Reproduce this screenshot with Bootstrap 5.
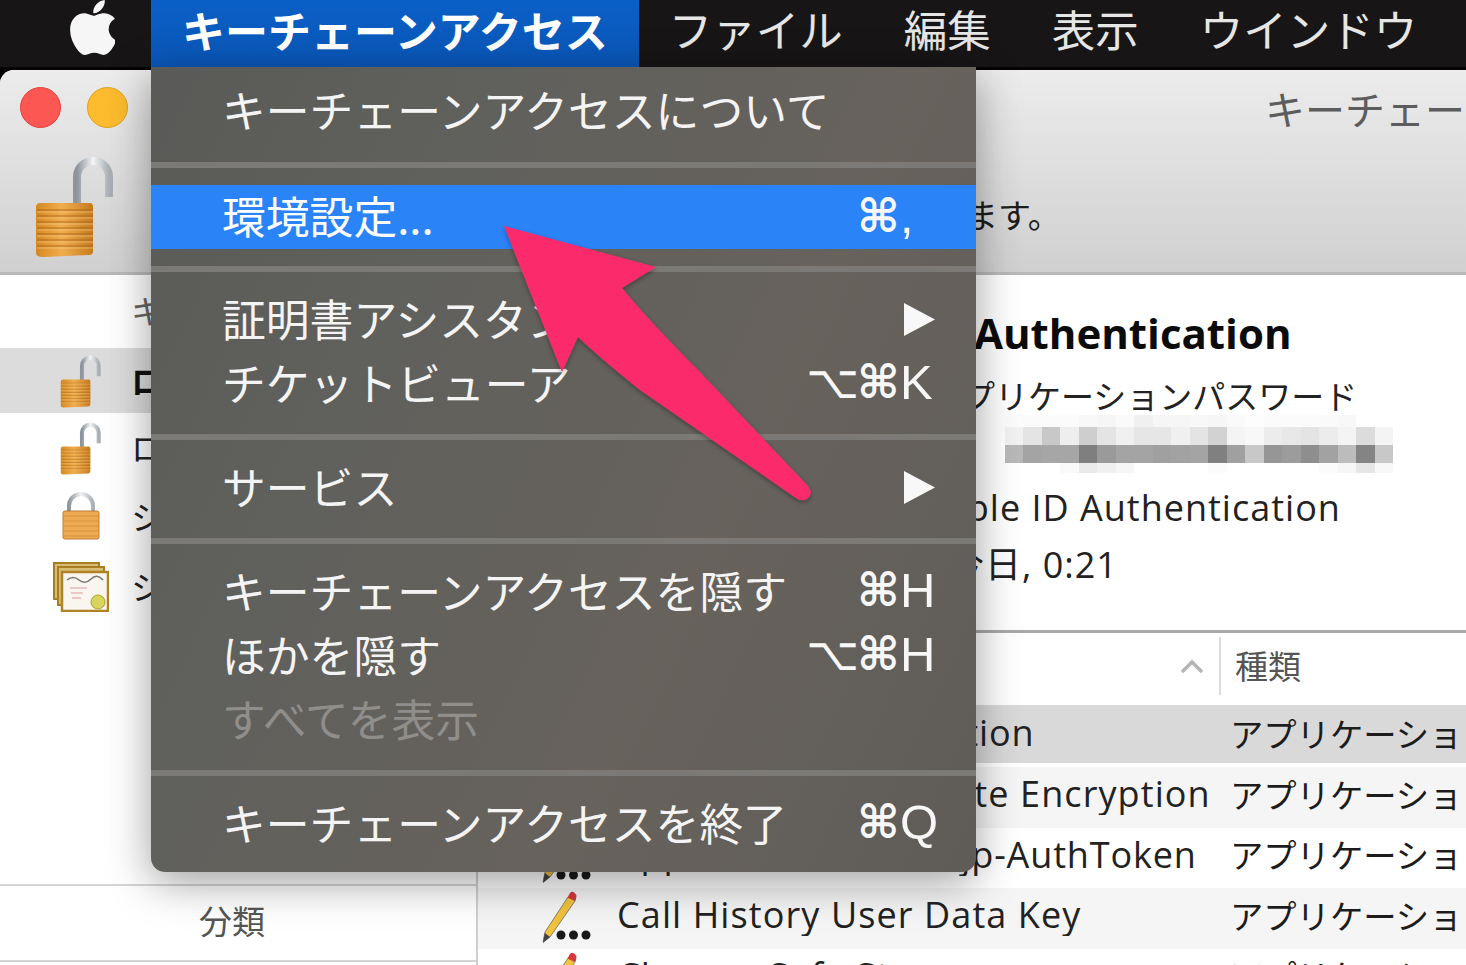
<!DOCTYPE html>
<html lang="ja">
<head>
<meta charset="utf-8">
<title>キーチェーンアクセス</title>
<link href="https://cdn.jsdelivr.net/npm/bootstrap@5.3.0/dist/css/bootstrap.min.css" rel="stylesheet">
<style>
html,body{margin:0;height:965px;overflow:hidden;background:#fff}
body{font-family:"Open Sans","Noto Sans CJK JP",sans-serif;color:#222;line-height:1.2}
.jp{font-family:"Noto Sans CJK JP",sans-serif}
.stage{width:1466px;height:965px;overflow:hidden;background:#000}
/* menu bar */
.mbar{height:70px;background:#171515;border-bottom:3px solid #050303;color:#e6e6e6;font-size:43.5px;font-family:"Noto Sans CJK JP",sans-serif;font-weight:400;white-space:nowrap}
.apl{width:45px;height:55px;margin:0 36px 0 70px;fill:#f6f6f6;flex:none}
.mi{height:67px;padding:0 31px 0 30px;line-height:58px}
.mi-on{background:linear-gradient(#0a5fc6,#0a57b8);color:#fff;font-weight:700;padding:0 31px 0 31px;font-size:43px}
/* window */
.wnd{height:895px;background:#fff;border-radius:14px 0 0 0;overflow:hidden}
.tbar{height:205px;background:linear-gradient(#ececec,#d0d0d0);border-bottom:3px solid #b9b9b9;overflow:hidden;flex:none}
.tl{width:41px;height:41px;border-radius:50%;flex:none}
.tl-r{background:#fc5753;border:1px solid #e0443e;margin-left:20px}
.tl-y{background:#fdbc2e;border:1px solid #dfa023;margin-left:26px}
.ttl{font-size:40px;color:#5c5c5c;margin-left:1137px;white-space:nowrap;font-weight:400;line-height:42px}
.tr1{height:76px;padding-top:17px}
.biglock{width:80px;height:104px;margin:8px 0 0 35px;flex:none}
.tnote{font-size:33px;color:#1d1d1d;margin:49px 0 0 850px;white-space:nowrap}
/* sidebar */
.side{width:478px;flex:none;border-right:2px solid #cfcfcf;font-family:"Noto Sans CJK JP",sans-serif}
.sh{height:73px;padding-left:131px;line-height:70px;font-size:33px;color:#666;white-space:nowrap}
.sr{height:65px;font-size:33px;white-space:nowrap;position:relative}
.sr-on{background:#dcdcdc;font-weight:700;color:#111}
.ico{flex:none}
.si{margin-left:60px;width:42px;height:54px}
.st{margin-left:29px}
.st-c{margin-left:22px}
.ci{margin-left:53px}
.sr3{height:69px}
.sr4{height:71px}
.sfoot{margin-top:auto;margin-bottom:3px;border-top:2px solid #d5d5d5;height:78px;text-align:center;font-size:33px;color:#555;line-height:68px;padding-right:12px;border-bottom:2px solid #d5d5d5;flex:none;font-weight:400}
.sside{height:690px}
/* main */
.mainp{width:988px;overflow:hidden;flex:none}
.dtl{height:358px;border-bottom:3px solid #a9a9a9;flex:none;white-space:nowrap;padding-top:33px}
.d1{font-size:42px;font-weight:700;color:#0b0b0b;line-height:50px;margin-left:496px}
.d2{font-size:33px;line-height:50px;margin:12px 0 0 451px;color:#222;font-family:"Noto Sans CJK JP",sans-serif;font-weight:400}
.blr{display:block;margin:-5px 0 0 526px;width:390px;height:66px}
.d3{font-size:36px;letter-spacing:1px;line-height:50px;margin:2px 0 0 442px;color:#222}
.d4{font-size:36px;letter-spacing:1px;line-height:50px;margin:4px 0 0 470px;color:#222}
.thd{height:72px;flex:none;font-size:33px;color:#555;font-family:"Noto Sans CJK JP",sans-serif;padding-bottom:6px}
.caret{width:24px;height:14px;margin-left:702px;flex:none}
.cdiv{width:2px;height:58px;background:#dcdcdc;margin:0 14px 0 15px;flex:none}
.tr{height:60.5px;flex:none;white-space:nowrap;font-size:36px;letter-spacing:1.1px;color:#222}
.tr-sel{background:#d9d9d9;height:58px;margin-bottom:4px}
.tr-alt{background:#f5f5f5}
.pen{width:54px;height:56px;margin-left:62px;flex:none}
.tn{width:613px;flex:none;margin-left:23px;overflow:hidden;margin-bottom:7px}
.tn-t{letter-spacing:.85px}
.tk{font-family:"Noto Sans CJK JP",sans-serif;font-size:33.3px;font-weight:400;overflow:hidden;color:#1c1c1c;letter-spacing:0;margin-bottom:7px}
.tr-sel .tn,.tr-sel .tk{margin-bottom:2px}
/* dropdown */
.dmenu{position:absolute;left:151px;top:67px;width:825px;height:805px;padding-top:11px;border-radius:0 0 14px 14px;background:linear-gradient(115deg,#5a5a58 0%,#60605c 30%,#67625c 65%,#5f5c58 100%);box-shadow:0 10px 44px rgba(0,0,0,.38);color:#f4f4f4;font-family:"Noto Sans CJK JP",sans-serif;font-size:43.8px;font-weight:400;white-space:nowrap}
.mrow{height:64px;padding-left:71px;line-height:62px;position:relative}
.mrow-on{background:#2a84f8;color:#fff;line-height:60px}
.mrow-off{color:#908e8b}
.msep{height:6px;background:#7b7a76;margin:19px 0 15px}
.msep-a{margin:20px 0 17px}
.msep-b{margin:17px 0 15px}
.keys{position:absolute;left:655px;top:0;display:flex;font-family:"DejaVu Sans",sans-serif;font-weight:700;line-height:62px;font-size:46px;color:#f7f7f7}
.k-o{width:51px;text-align:left;font-weight:400}
.k-c{width:43px;text-align:left}
.k-s{width:51px}
.k-l{font-family:"Liberation Sans",sans-serif;font-size:49px;font-weight:400}
.tri{position:absolute;left:753px;top:16px;width:31px;height:33px;fill:#f8f8f8}
.arrow{position:absolute;left:480px;top:200px;width:360px;height:320px;pointer-events:none}
</style>
</head>
<body>
<div class="stage position-relative">
  <div class="mbar d-flex">
    <svg class="apl" viewBox="4 32 365 448"><path d="M318.7 268.7c-.2-36.7 16.4-64.4 50-84.8-18.8-26.9-47.2-41.7-84.7-44.6-35.5-2.8-74.3 20.7-88.5 20.7-15 0-49.4-19.7-76.4-19.7C63.3 141.2 4 184.8 4 273.5q0 39.3 14.4 81.2c12.8 36.7 59 126.7 107.2 125.2 25.2-.6 43-17.9 75.8-17.9 31.8 0 48.3 17.9 76.4 17.9 48.6-.7 90.4-82.5 102.6-119.3-65.2-30.7-61.7-90-61.7-91.9zm-56.6-164.2c27.3-32.4 24.8-61.9 24-72.5-24.1 1.4-52 16.4-67.9 34.9-17.5 19.8-27.8 44.3-25.6 71.9 26.1 2 49.9-11.4 69.5-34.3z"/></svg>
    <div class="mi mi-on">キーチェーンアクセス</div>
    <div class="mi">ファイル</div>
    <div class="mi">編集</div>
    <div class="mi">表示</div>
    <div class="mi">ウインドウ</div>
  </div>

  <svg width="0" height="0" class="position-absolute">
    <defs>
      <linearGradient id="g-body" x1="0" x2="1" y1="0" y2="0"><stop offset="0" stop-color="#d48722"/><stop offset=".45" stop-color="#f0ae4e"/><stop offset="1" stop-color="#c67a1e"/></linearGradient>
      <linearGradient id="g-steel" x1="0" x2="1" y1="0" y2="0"><stop offset="0" stop-color="#8d949c"/><stop offset=".5" stop-color="#f2f4f6"/><stop offset="1" stop-color="#a8aeb4"/></linearGradient>
      <symbol id="open-lock" viewBox="0 0 80 104">
        <path d="M42 50V23a16 16 0 0 1 32 0V43" fill="none" stroke="url(#g-steel)" stroke-width="8"/>
        <path d="M1 53Q1 49 6 49H55Q58 49 58 53V97Q58 101 54 101L8 103Q1 103 1 99Z" fill="url(#g-body)"/>
        <g stroke="#a9661a" stroke-width="1.4" opacity=".6"><path d="M2 56H58M2 62H58M2 68H58M2 74H58M2 80H58M2 86H58M2 92H58"/></g>
        <g stroke="#f8cf8a" stroke-width="1" opacity=".6"><path d="M2 58H58M2 64H58M2 70H58M2 76H58M2 82H58M2 88H58M2 94H58"/></g>
      </symbol>
      <symbol id="closed-lock" viewBox="0 0 38 48">
        <path d="M7 22V14a12 12 0 0 1 24 0V22" fill="none" stroke="url(#g-steel)" stroke-width="4"/>
        <rect x="1" y="19" width="36" height="28" rx="2" fill="#eeaa52" stroke="#bb7a3a"/>
        <path d="M2 24H36M2 29H36M2 34H36M2 39H36M2 44H36" stroke="#c98735" stroke-width="1" opacity=".7"/>
      </symbol>
      <symbol id="cert" viewBox="0 0 56 50">
        <rect x="1" y="1" width="45" height="36" fill="#d9bc74" stroke="#a87d22" stroke-width="2"/>
        <rect x="5" y="5" width="46" height="38" fill="#d9bc74" stroke="#a87d22" stroke-width="2"/>
        <rect x="9" y="10" width="46" height="39" fill="#f8f6ee" stroke="#b08224" stroke-width="2.5"/>
        <path d="M14 18Q20 13 26 18T38 17T50 18" fill="none" stroke="#777" stroke-width="1.6"/>
        <path d="M17 26H34M18 31H30M19 36H28" stroke="#e6b8b8" stroke-width="1.4"/>
        <circle cx="45" cy="40" r="7" fill="#d8d45c" stroke="#a9a533"/>
      </symbol>
      <symbol id="pencil" viewBox="0 0 54 56">
        <path d="M3 52L5 42L28 7L35 11L10 47Z" fill="#f2c23c" stroke="#6b6b6b" stroke-width=".8"/>
        <path d="M27.500 7.500L30 3Q32 1 34 2.500L36 4.500Q37 6 35.500 11Z" fill="#d8383a"/>
        <path d="M3 53L4.800 43L10 47Z" fill="#444"/>
        <circle cx="21" cy="45" r="4.500" fill="#1a1a1a"/><circle cx="33.500" cy="45" r="4.500" fill="#1a1a1a"/><circle cx="46" cy="45" r="4.500" fill="#1a1a1a"/>
      </symbol>
    </defs>
  </svg>

  <div class="wnd d-flex flex-column">
    <div class="tbar">
      <div class="tr1 d-flex align-items-start">
        <span class="tl tl-r"></span><span class="tl tl-y"></span>
        <span class="ttl jp">キーチェーンアクセス</span>
      </div>
      <div class="d-flex align-items-start">
        <svg class="biglock"><use href="#open-lock"/></svg>
        <span class="tnote jp">ます。</span>
      </div>
    </div>
    <div class="d-flex flex-grow-1">
      <div class="side d-flex flex-column sside">
        <div class="sh">キーチェーン</div>
        <div class="sr sr-on d-flex align-items-center"><svg class="ico si"><use href="#open-lock"/></svg><span class="st">ログイン</span></div>
        <div class="sr d-flex align-items-center sr3"><svg class="ico si"><use href="#open-lock"/></svg><span class="st">ローカル項目</span></div>
        <div class="sr d-flex align-items-center sr3"><svg class="ico si" viewBox="0 0 42 54"><use href="#closed-lock" x="2" y="2" width="38" height="48"/></svg><span class="st">システム</span></div>
        <div class="sr d-flex align-items-center sr4"><svg class="ico ci" width="56" height="50"><use href="#cert"/></svg><span class="st-c">システムルート</span></div>
        <div class="sfoot">分類</div>
      </div>
      <div class="mainp d-flex flex-column">
        <div class="dtl">
          <div class="d1">Authentication</div>
          <div class="d2">アプリケーションパスワード</div>
          <svg class="blr" viewBox="0 0 389 66" shape-rendering="crispEdges" id="blurbox"></svg>
          <div class="d3">Apple ID Authentication</div>
          <div class="d4"><span class="jp">今日</span>, 0:21</div>
        </div>
        <div class="thd d-flex align-items-center">
          <svg class="caret" viewBox="0 0 24 14"><path d="M2 13L12 3L22 13" fill="none" stroke="#b5b5b5" stroke-width="3.5"/></svg>
          <span class="cdiv"></span><span>種類</span>
        </div>
        <div class="tr tr-sel d-flex align-items-center"><svg class="pen"><use href="#pencil"/></svg><span class="tn tn-t">Apple ID Authentication</span><span class="tk">アプリケーションパスワード</span></div>
        <div class="tr tr-alt d-flex align-items-center"><svg class="pen"><use href="#pencil"/></svg><span class="tn">Apple Persistent State Encryption</span><span class="tk">アプリケーションパスワード</span></div>
        <div class="tr d-flex align-items-center"><svg class="pen"><use href="#pencil"/></svg><span class="tn tn-t">Apple Account Info-jp-AuthToken</span><span class="tk">アプリケーションパスワード</span></div>
        <div class="tr tr-alt d-flex align-items-center"><svg class="pen"><use href="#pencil"/></svg><span class="tn">Call History User Data Key</span><span class="tk">アプリケーションパスワード</span></div>
        <div class="tr d-flex align-items-center"><svg class="pen"><use href="#pencil"/></svg><span class="tn">Chrome Safe Storage</span><span class="tk">アプリケーションパスワード</span></div>
      </div>
    </div>
  </div>

  <div class="dmenu">
    <div class="mrow">キーチェーンアクセスについて</div>
    <div class="msep msep-a"></div>
    <div class="mrow mrow-on">環境設定...<span class="keys"><span class="k-s"></span><span class="k-c">⌘</span><span class="k-l">,</span></span></div>
    <div class="msep msep-b"></div>
    <div class="mrow">証明書アシスタント<svg class="tri" viewBox="0 0 31 33"><path d="M0 0L31 16.5L0 33Z"/></svg></div>
    <div class="mrow">チケットビューア<span class="keys"><span class="k-o">⌥</span><span class="k-c">⌘</span><span class="k-l">K</span></span></div>
    <div class="msep"></div>
    <div class="mrow">サービス<svg class="tri" viewBox="0 0 31 33"><path d="M0 0L31 16.5L0 33Z"/></svg></div>
    <div class="msep"></div>
    <div class="mrow">キーチェーンアクセスを隠す<span class="keys"><span class="k-s"></span><span class="k-c">⌘</span><span class="k-l">H</span></span></div>
    <div class="mrow">ほかを隠す<span class="keys"><span class="k-o">⌥</span><span class="k-c">⌘</span><span class="k-l">H</span></span></div>
    <div class="mrow mrow-off">すべてを表示</div>
    <div class="msep"></div>
    <div class="mrow">キーチェーンアクセスを終了<span class="keys"><span class="k-s"></span><span class="k-c">⌘</span><span class="k-l">Q</span></span></div>
  </div>

  <svg class="arrow" viewBox="480 200 360 320">
    <defs><filter id="ash" x="-10%" y="-10%" width="120%" height="120%"><feDropShadow dx="0" dy="2" stdDeviation="2.5" flood-color="#000" flood-opacity=".35"/></filter></defs>
    <path filter="url(#ash)" fill="#fb2c6b" d="M504 226L656 267L622 288Q650 322 700 372L808 486Q814 494 807 499Q802 502 796 498L640 390Q600 358 578 337L562 372Z"/>
  </svg>
</div>
<script>
(function(){
  var rows=[
   [0,12,["fc","fb","fb","fb","f8","f6","fa","f0","f6","f6","f8","f6","fa","fd","fb","fb","fb","fa","f8","ff","ff"]],
   [12,18,["f2","e4","c8","ee","ce","e4","f0","e6","e6","f0","e4","d2","f4","f8","ec","e8","e4","ec","f4","dc","f4"]],
   [30,18,["b9","a4","a6","a6","7f","9a","a4","a4","a0","a2","a4","80","a0","c8","96","9c","8e","a2","bc","84","c8"]],
   [48,10,["ff","ff","ff","fa","ea","f0","f6","ff","ff","ff","ff","fb","ff","ff","ff","ff","ff","fb","f6","e6","f8"]]
  ];
  var s="";
  rows.forEach(function(r){r[2].forEach(function(c,i){s+='<rect x="'+(i*18.5)+'" y="'+r[0]+'" width="18.6" height="'+r[1]+'" fill="#'+c+c.slice(0,2)+c+'"/>';});});
  document.getElementById("blurbox").innerHTML=s;
})();
</script>
</body>
</html>
